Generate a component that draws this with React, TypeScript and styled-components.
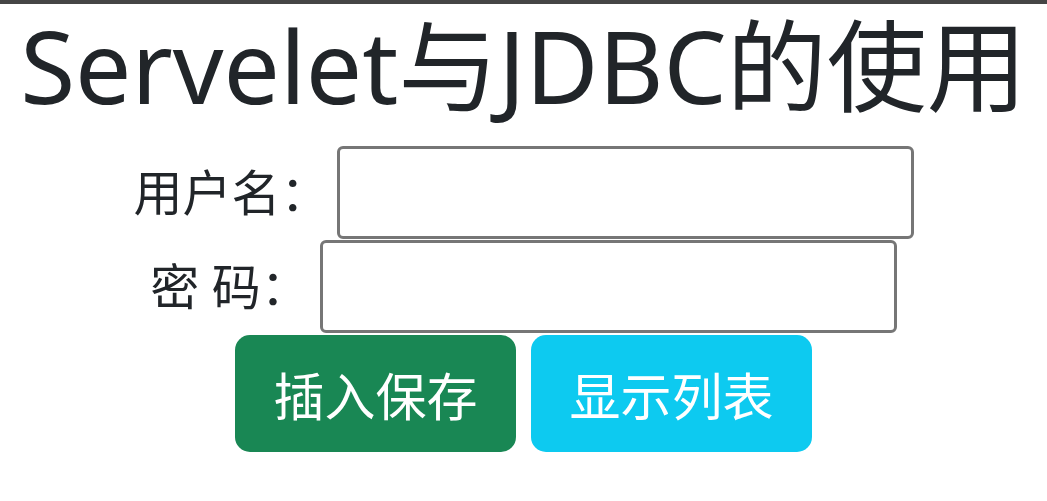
import styled, { createGlobalStyle } from 'styled-components';

const GlobalStyle = createGlobalStyle`
  body {
    margin: 0;
    background: #fff;
    color: #212529;
    font-family: 'Noto Sans', 'Noto Sans CJK SC', sans-serif;
  }
`;

export default function App() {
  return (
    <>
      <GlobalStyle />
      <S.Page>
        <S.Title>Servelet与JDBC的使用</S.Title>
        <S.Form onSubmit={(e) => e.preventDefault()}>
          <S.Row>
            <S.Label $gap={7}>用户名：</S.Label>
            <S.Input type="text" name="username" />
          </S.Row>
          <S.Row>
            <S.Label $gap={10}>密 码：</S.Label>
            <S.Input type="password" name="password" />
          </S.Row>
          <S.Buttons>
            <S.Button type="submit" $variant="success">
              插入保存
            </S.Button>
            <S.Button type="button" $variant="info">
              显示列表
            </S.Button>
          </S.Buttons>
        </S.Form>
      </S.Page>
    </>
  );
}

const S = {
  Page: styled.div`
    border-top: 4px solid #454545;
    text-align: center;
  `,
  Title: styled.h1`
    margin: 0;
    font-size: 100px;
    font-weight: 400;
    line-height: 122px;
    color: #212529;
    white-space: nowrap;
  `,
  Form: styled.form`
    display: flex;
    flex-direction: column;
    align-items: center;
    gap: 1px;
    margin-top: 20px;
  `,
  Row: styled.div`
    display: flex;
    align-items: center;
  `,
  Label: styled.label<{ $gap: number }>`
    font-size: 49px;
    line-height: 1;
    color: #212529;
    margin-right: ${(p) => p.$gap}px;
  `,
  Input: styled.input`
    box-sizing: border-box;
    width: 577px;
    height: 93px;
    border: 3px solid #767676;
    border-radius: 6px;
    background: #fff;
    outline: none;
  `,
  Buttons: styled.div`
    display: flex;
    gap: 15px;
    margin-top: 1px;
  `,
  Button: styled.button<{ $variant: 'success' | 'info' }>`
    box-sizing: border-box;
    width: 281px;
    height: 117px;
    border: none;
    border-radius: 15px;
    background: ${(p) => (p.$variant === 'success' ? '#198754' : '#0dcaf0')};
    color: #fff;
    font-family: 'Noto Sans', 'Noto Sans CJK SC', sans-serif;
    font-size: 51px;
    cursor: pointer;
  `,
};
